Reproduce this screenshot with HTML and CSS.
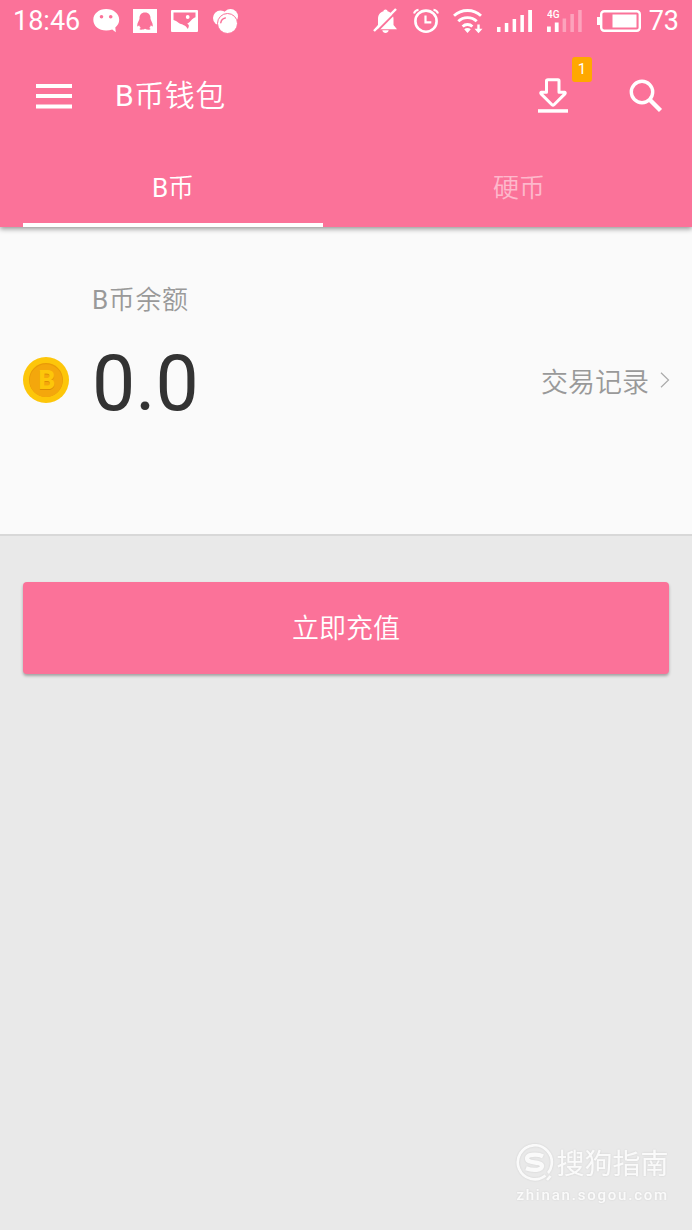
FILE: index.html
```html
<!DOCTYPE html>
<html lang="zh-CN">
<head>
    <meta charset="UTF-8">
    <meta name="viewport" content="width=device-width, initial-scale=1.0">
    <title>B币钱包</title>
    <link rel="stylesheet" href="styles.css">
</head>
<body>
    <header class="header">
        <div class="status">
            <span class="clock">18:46</span>
            <div class="apps">
                <svg width="27" height="24" viewBox="0 0 27 24">
                    <path fill="#fff" d="M13.2 0C5.800 0 .3 4.800.3 10.700c0 6.200 5.500 10.800 12.900 10.800 2.200 0 4.200-.4 6-1.100l3.600 2.900-.5-4.900c2.500-2 3.900-4.700 3.900-7.700C26.200 4.800 20.600 0 13.200 0z"/>
                    <circle cx="8.500" cy="7.800" r="1.800" fill="#fb7299"/>
                    <circle cx="17.700" cy="7.800" r="1.800" fill="#fb7299"/>
                </svg>
                <svg width="24" height="24" viewBox="0 0 24 24">
                    <path fill="#fff" d="M0 0h24v24H0z"/>
                    <path fill="#fb7299" d="M12 3.600c-3.800 0-5.700 2.700-5.500 6.100-.2 1.600-2.300 4-2.300 6.800 0 1.300.9 1.100 1.900-.2.300 1.100.9 2 1.700 2.700-1.800.6-1.700 1.700.3 1.700 1.700 0 3-.3 3.900-.9.900.6 2.200.9 3.900.9 2 0 2.100-1.100.3-1.700.8-.7 1.400-1.600 1.700-2.700 1 1.300 1.900 1.500 1.900.2 0-2.800-2.100-5.200-2.300-6.800.2-3.400-1.700-6.100-5.500-6.100z"/>
                </svg>
                <svg width="27" height="22" viewBox="0 0 27 22">
                    <rect width="27" height="22" rx="1" fill="#fff"/>
                    <path fill="#fb7299" d="M2.500 2.500h22v4.800c-3.500 1-5 4.800-8.300 6.500 2 1 2.300 2.200.6 5.200-2.500-4.500-6.300-4.300-9.300-6.200-2-1.300-3-2.500-5-2.800z"/>
                    <circle cx="16.700" cy="7" r="1.900" fill="#fff"/>
                </svg>
                <svg width="26" height="25" viewBox="0 0 26 25">
                    <circle cx="7.500" cy="9" r="7.500" fill="#fff"/>
                    <circle cx="17.500" cy="7.500" r="7.500" fill="#fff"/>
                    <circle cx="14.500" cy="14.500" r="10" fill="#fff" stroke="#fb7299" stroke-width="1"/>
                    <path stroke="#fb7299" stroke-width="1.500" fill="none" stroke-linecap="round" d="M7.800 13.700c.5-2.700 2.100-4.200 4.500-4.700"/>
                </svg>
            </div>
            <div class="system">
                <svg class="bell" width="25" height="26" viewBox="0 0 25 26">
                    <path fill="#fff" d="M12.500 1.500c-1.200 0-2 .8-2 1.800C6.500 4.500 5 7.500 5 11v6l-3.500 4.200h22.500L20.500 17v-6c0-3.500-2-6.500-6-7.700 0-1-.8-1.800-2-1.800zM9.300 22.300c.4 1.700 1.700 2.700 3.200 2.700s2.800-1 3.200-2.700z"/>
                    <path stroke="#fb7299" stroke-width="2" d="M3 24.300L24.500 2.600"/>
                    <path stroke="#fff" stroke-width="2.400" d="M1 23L23 1"/>
                </svg>
                <svg class="alarm" width="26" height="26" viewBox="0 0 26 26" fill="none" stroke="#fff">
                    <circle cx="13" cy="13.200" r="10.600" stroke-width="2.600"/>
                    <path stroke-width="2.200" d="M12.500 7.500v6.800h5.800"/>
                    <path stroke-width="2" d="M1 5.500C1.500 3.500 3 2 5.500 1.700M25 5.500c-.5-2-2-3.500-4.500-3.800"/>
                </svg>
                <svg class="wifi" width="30" height="25" viewBox="0 0 30 25" fill="none" stroke="#fff" stroke-width="2.800">
                    <path d="M1 6.800C8.500-.3 20.500-.3 28 6.800M5.300 12.300c5-5 13.400-5 18.400 0M9.600 17.500c2.800-2.700 7-2.700 9.800 0"/>
                    <path fill="#fff" stroke="none" d="M11.200 20.300c1.800-1.600 4.800-1.600 6.600 0L14.500 24zM24.300 15.500h2.400v4.200h2.800l-4 4.600-4-4.600h2.800z"/>
                </svg>
                <svg class="signal" width="35" height="22" viewBox="0 0 35 22" fill="#fff">
                    <rect y="17" width="3.500" height="5"/>
                    <rect x="7.800" y="13" width="3.500" height="9"/>
                    <rect x="15.600" y="9" width="3.500" height="13"/>
                    <rect x="23.400" y="5" width="3.500" height="17"/>
                    <rect x="31.200" y="0" width="3.800" height="22"/>
                </svg>
                <svg class="signal-4g" width="35" height="23" viewBox="0 0 35 23" fill="#fff">
                    <text class="net" x="0" y="8">4G</text>
                    <rect y="16.500" width="3.800" height="5.500"/>
                    <rect x="7.800" y="12.500" width="3.800" height="9.500"/>
                    <g opacity=".35">
                        <rect x="15.600" y="8.500" width="3.500" height="13.500"/>
                        <rect x="23.400" y="4" width="3.500" height="18"/>
                        <rect x="31.200" y="0" width="3.500" height="22"/>
                    </g>
                </svg>
                <svg class="battery" width="44" height="22" viewBox="0 0 44 22">
                    <rect x="4.200" y="1.200" width="38.600" height="19.600" rx="3" fill="none" stroke="#fff" stroke-width="2.400"/>
                    <path fill="#fff" d="M0 7h3v8H0zM15.500 4.500h24v13h-24z"/>
                </svg>
                <span class="percent">73</span>
            </div>
        </div>

        <div class="toolbar">
            <svg width="36" height="26" viewBox="0 0 36 26">
                <path fill="#fff" d="M0 1h36v4H0zM0 11h36v4H0zM0 21.500h36v4H0z"/>
            </svg>
            <h1 class="title"><span class="latin">B</span>币钱包</h1>
            <div class="download">
                <svg width="30" height="35" viewBox="0 0 30 35">
                    <path fill="none" stroke="#fff" stroke-width="3" stroke-linejoin="round" d="M10 1.800h10q1 0 1 1v11.500h5.500q1.300.3.400 1.600L16 26.700q-1 .9-2 0L3.100 15.900q-.9-1.300.4-1.600H8.500V2.800q0-1 1.500-1z"/>
                    <path fill="#fff" d="M0 31.200h30v3.500H0z"/>
                </svg>
                <span class="badge">1</span>
            </div>
            <svg class="search" width="34" height="34" viewBox="0 0 34 34" fill="none" stroke="#fff">
                <circle cx="13" cy="13" r="10.700" stroke-width="3.400"/>
                <path stroke-width="4.400" d="M20.500 20.500l11 11"/>
            </svg>
        </div>

        <nav class="tabs">
            <a class="tab active"><span class="latin">B</span>币</a>
            <a class="tab">硬币</a>
        </nav>
    </header>

    <section class="wallet">
        <div class="label"><span class="latin">B</span>币余额</div>
        <div class="balance">
            <svg class="coin" width="46" height="46" viewBox="0 0 46 46">
                <circle cx="23" cy="23" r="23" fill="#fdc60a"/>
                <circle cx="23" cy="23" r="17" fill="#e99a08"/>
                <circle cx="23" cy="23.600" r="16.300" fill="#f4a70c"/>
                <text class="coin-shade" x="24" y="33">B</text>
                <text class="coin-letter" x="24" y="32">B</text>
            </svg>
            <span class="amount">0.0</span>
            <a class="record">交易记录
                <svg width="10" height="16" viewBox="0 0 10 16">
                    <path fill="none" stroke="#aaa" stroke-width="1.200" d="M1 .7L8.500 8 1 15.300"/>
                </svg>
            </a>
        </div>
    </section>

    <button class="recharge">立即充值</button>

    <footer class="watermark">
        <div class="brand">
            <svg width="38" height="38" viewBox="0 0 38 38" fill="none" stroke="#fff">
                <path stroke-width="2.600" d="M29.500 31.500A17 17 0 1 1 35.500 21.500Q34.800 26 32 29"/>
                <path stroke-width="4.200" d="M27 12.300c-3-1.500-7-2-11-1.500-6.500.8-6.500 5.700-1 7 4 .9 11 .8 11 4.200 0 4.500-9 5-16 2.300"/>
                <path stroke-width="2.600" d="M31 36l3.500-4"/>
            </svg>
            <span>搜狗指南</span>
        </div>
        <div class="site">zhinan.sogou.com</div>
    </footer>
</body>
</html>
```

FILE: styles.css
```css
* {
    box-sizing: border-box;
}
body {
    display: flex;
    flex-direction: column;
    height: 1230px;
    margin: 0;
    font-family: Roboto, "Noto Sans CJK SC", sans-serif;
    font-weight: 350;
    background-color: #e9e9e9;
    color: #333;
    overflow: hidden;
}
svg {
    display: block;
    flex: none;
}
.latin {
    font-weight: 400;
}
.header {
    position: relative;
    z-index: 1;
    height: 227px;
    background-color: #fb7299;
    color: #fff;
    box-shadow: 0 2px 5px rgba(0, 0, 0, 0.4);
}
.status {
    display: flex;
    align-items: center;
    height: 42px;
    padding: 0 13px 0 13px;
    font-size: 27px;
    font-weight: 400;
}
.clock {
    width: 80px;
}
.apps {
    display: flex;
    align-items: center;
    gap: 14px;
}
.apps svg:nth-child(2) {
    margin-left: -1px;
}
.apps svg:last-child {
    margin-left: 1px;
}
.system {
    display: flex;
    align-items: center;
    margin-left: auto;
}
.alarm {
    margin-left: 15px;
}
.wifi {
    margin-left: 14px;
}
.signal {
    margin-left: 14px;
}
.signal-4g {
    margin-left: 15px;
}
.net {
    font-size: 10px;
    font-weight: 500;
}
.battery {
    margin-left: 15px;
}
.percent {
    margin-left: 8px;
}
.toolbar {
    display: flex;
    align-items: center;
    height: 108px;
    padding: 0 29px 0 36px;
}
.title {
    margin: -6px auto 0 43px;
    font-size: 30px;
    font-weight: 350;
    letter-spacing: 0.5px;
}
.download {
    position: relative;
    margin: -2px 61px 0 0;
}
.badge {
    position: absolute;
    top: -21px;
    left: 34px;
    width: 20px;
    height: 25px;
    border-radius: 3px;
    background-color: #ffa800;
    font-size: 15px;
    font-weight: 400;
    line-height: 25px;
    text-align: center;
}
.tabs {
    display: grid;
    grid-template-columns: 1fr 1fr;
    height: 77px;
    font-size: 26px;
    line-height: 76px;
    text-align: center;
}
.tab {
    height: 77px;
    color: rgba(255, 255, 255, 0.5);
}
.tab.active {
    margin: 0 23px;
    border-bottom: 4px solid #fff;
    color: #fff;
}
.wallet {
    height: 309px;
    padding: 53px 22px 0 23px;
    background-color: #fafafa;
    border-bottom: 2px solid #d8d8d8;
    color: #999;
}
.label {
    padding-left: 69px;
    font-size: 26px;
    line-height: 40px;
    letter-spacing: 0.6px;
}
.balance {
    display: flex;
    align-items: center;
    height: 120px;
}
.coin text {
    font-family: Roboto, sans-serif;
    font-size: 26px;
    font-weight: 900;
    text-anchor: middle;
}
.coin-shade {
    fill: #dc8d05;
}
.coin-letter {
    fill: #fdc60a;
}
.amount {
    margin: 8px 0 0 23px;
    color: #333;
    font-size: 77px;
    font-weight: 400;
}
.record {
    display: flex;
    align-items: center;
    gap: 11px;
    margin-left: auto;
    font-size: 27px;
}
.recharge {
    height: 92px;
    margin: 46px 23px 0;
    padding-bottom: 4px;
    border: none;
    border-radius: 4px;
    background-color: #fb7299;
    box-shadow: 0 2px 3px rgba(0, 0, 0, 0.3);
    color: #fff;
    font: inherit;
    font-size: 27px;
}
.watermark {
    margin: auto 23px 23px auto;
    color: #fff;
    opacity: 0.8;
    filter: drop-shadow(0 0 1px rgba(0, 0, 0, 0.12));
}
.brand {
    display: flex;
    align-items: center;
    gap: 2px;
    height: 40px;
    font-size: 28px;
    font-weight: 400;
}
.brand span {
    margin-top: -3px;
}
.site {
    font-size: 15px;
    font-weight: 500;
    line-height: 24px;
    letter-spacing: 1.8px;
}
```
